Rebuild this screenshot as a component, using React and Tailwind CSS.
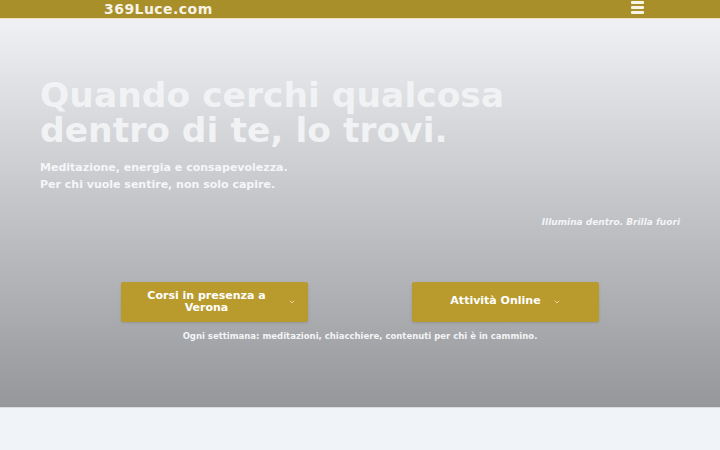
import { ChevronDown } from "lucide-react";

const font = "font-['DejaVu_Sans',sans-serif]";

export default function App() {
  return (
    <div className={`min-h-[450px] bg-[#f0f4f8] ${font}`}>
      {/* Top bar */}
      <header className="h-[19px] bg-[#a88f2a] border-b border-[#f3dfbd] flex items-center justify-between pl-[104px] pr-[76px]">
        <span className="text-[14px] font-bold text-[#f7f3e6] leading-none tracking-[0.45px]">
          369Luce.com
        </span>
        <div className="flex flex-col gap-[2px] w-[13px] mt-[-3px]">
          <span className="h-[3px] bg-[#f7f3e6] rounded-[1px]" />
          <span className="h-[3px] bg-[#f7f3e6] rounded-[1px]" />
          <span className="h-[3px] bg-[#f7f3e6] rounded-[1px]" />
        </div>
      </header>

      {/* Hero */}
      <section className="h-[389px] bg-gradient-to-b from-[#eff1f4] to-[#96979b] border-b border-[#d9dce0] px-10 pt-[59px]">
        <h1 className="text-[34.5px] font-bold leading-[35px] text-[#f3f4f6] opacity-95">
          Quando cerchi qualcosa
          <br />
          dentro di te, lo trovi.
        </h1>
        <p className="mt-[11px] text-[11px] font-bold leading-[17px] text-[#f5f6f8]">
          Meditazione, energia e consapevolezza.
          <br />
          Per chi vuole sentire, non solo capire.
        </p>
        <p className="mt-[23px] text-right text-[9px] font-bold italic text-[#f3f4f6]">
          Illumina dentro. Brilla fuori
        </p>

        <div className="mt-[52px] flex justify-center gap-[104px]">
          <button className="w-[187px] h-[40px] bg-[#b99b2d] rounded-[2px] flex items-center px-3 text-white shadow-sm">
            <span className="flex-1 text-[11px] font-bold leading-[12px] text-center">
              Corsi in presenza a
              <br />
              Verona
            </span>
            <ChevronDown size={8} strokeWidth={2.5} className="ml-2 text-[#efe3b8]" />
          </button>
          <button className="w-[187px] h-[40px] bg-[#b99b2d] rounded-[2px] flex items-center justify-center text-white shadow-sm">
            <span className="text-[11px] font-bold">Attività Online</span>
            <ChevronDown size={8} strokeWidth={2.5} className="ml-3 text-[#efe3b8]" />
          </button>
        </div>
        <p className="mt-[8px] text-center text-[8.5px] font-bold text-[#f3f4f6]">
          Ogni settimana: meditazioni, chiacchiere, contenuti per chi è in cammino.
        </p>
      </section>
    </div>
  );
}
